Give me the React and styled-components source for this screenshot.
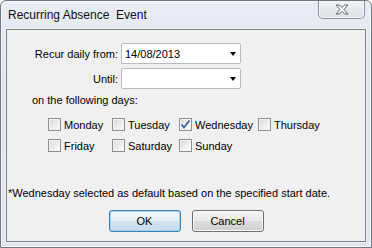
import React from 'react';
import styled, { createGlobalStyle } from 'styled-components';

const GlobalStyle = createGlobalStyle`
  html, body {
    margin: 0;
    padding: 0;
    background: #ffffff;
  }
  body {
    font-family: 'Liberation Sans', Arial, sans-serif;
    font-size: 11px;
    color: #000;
  }
`;

const Window = styled.div`
  box-sizing: border-box;
  width: 372px;
  height: 248px;
  display: flex;
  flex-direction: column;
  border: 1px solid #6f7882;
  border-radius: 6px 6px 0 0;
  background: linear-gradient(180deg, #e9eef3 0%, #dde4ec 30%, #dfe5ec 100%);
  box-shadow: inset 0 0 0 1px #f6f8fa;
  overflow: hidden;
`;

const TitleBar = styled.div`
  height: 28px;
  display: flex;
  align-items: flex-start;
  justify-content: space-between;
  padding-left: 7px;
  padding-right: 6px;
`;

const Title = styled.div`
  font-size: 12px;
  line-height: 14px;
  margin-top: 7px;
  white-space: pre;
  color: #101010;
`;

const CloseButton = styled.div`
  box-sizing: border-box;
  width: 47px;
  height: 19px;
  margin-top: -1px;
  display: flex;
  align-items: center;
  justify-content: center;
  border: 1px solid #8a9098;
  border-top: none;
  border-radius: 0 0 5px 5px;
  background: linear-gradient(180deg, #f3f5f8 0%, #e6eaef 50%, #dde2e8 100%);
  box-shadow: inset 0 0 0 1px #f8fafc;
`;

const Body = styled.div`
  flex: 1;
  margin: 0 5px 5px 5px;
  border: 1px solid #7c8086;
  background: #f0f0f0;
  box-shadow: 0 0 0 1px #f4f6f8;
  display: flex;
  flex-direction: column;
`;

const Form = styled.div`
  display: grid;
  grid-template-columns: 111px 120px;
  grid-auto-rows: 21px;
  column-gap: 3px;
  row-gap: 4px;
  margin-top: 13px;
`;

const Label = styled.div`
  display: flex;
  align-items: center;
  justify-content: flex-end;
`;

const Select = styled.div`
  box-sizing: border-box;
  display: flex;
  align-items: center;
  justify-content: space-between;
  padding: 0 4px 0 3px;
  background: #fff;
  border: 1px solid #b7babf;
  border-radius: 2px;
`;

const Arrow = styled.span`
  width: 0;
  height: 0;
  border-left: 3.5px solid transparent;
  border-right: 3.5px solid transparent;
  border-top: 4px solid #000;
`;

const SectionLabel = styled.div`
  margin: 4px 0 0 25px;
  height: 14px;
  line-height: 14px;
`;

const Days = styled.div`
  display: grid;
  grid-template-columns: 64px 67px 79px auto;
  grid-auto-rows: 21px;
  margin: 7px 0 0 41px;
`;

const Day = styled.label`
  display: flex;
  align-items: center;
  gap: 3px;
`;

const Box = styled.span`
  box-sizing: border-box;
  width: 13px;
  height: 13px;
  display: flex;
  align-items: center;
  justify-content: center;
  border: 1px solid #8e8f8f;
  background: linear-gradient(135deg, #d6d6d6 0%, #f0f0f0 60%, #fdfdfd 100%);
  box-shadow: inset 0 0 0 1px #f4f4f4;
`;

const Note = styled.div`
  margin: 30px 0 0 1px;
  height: 14px;
  line-height: 14px;
`;

const Buttons = styled.div`
  display: flex;
  justify-content: center;
  gap: 11px;
  margin-top: 10px;
`;

const Button = styled.div`
  box-sizing: border-box;
  width: 72px;
  height: 22px;
  display: flex;
  align-items: center;
  justify-content: center;
  border: 1px solid ${(p) => (p.$default ? '#3c7fb1' : '#707070')};
  border-radius: 3px;
  background: ${(p) =>
    p.$default
      ? 'linear-gradient(180deg, #f2f7fb 0%, #e6eff7 50%, #d3e3f0 51%, #c6dbec 100%)'
      : 'linear-gradient(180deg, #f2f2f2 0%, #ebebeb 50%, #dddddd 51%, #cfcfcf 100%)'};
  box-shadow: inset 0 0 0 1px ${(p) => (p.$default ? '#9fd3f0' : '#fbfbfb')};
`;

const Check = () => (
  <svg width="11" height="11" viewBox="0 0 11 11">
    <path d="M1.5 5.5 L4 8.5 L9.5 1.5" fill="none" stroke="#3a56a0" strokeWidth="1.6" />
  </svg>
);

const CloseIcon = () => (
  <svg width="14" height="11" viewBox="0 0 14 11">
    <path
      d="M1 1 H4.5 L7 3.6 L9.5 1 H13 L9 5.5 L13 10 H9.5 L7 7.4 L4.5 10 H1 L5 5.5 Z"
      fill="#f4f6f8"
      stroke="#5f656c"
      strokeWidth="1"
      strokeLinejoin="round"
    />
  </svg>
);

const days = [
  ['Monday', false],
  ['Tuesday', false],
  ['Wednesday', true],
  ['Thursday', false],
  ['Friday', false],
  ['Saturday', false],
  ['Sunday', false],
];

const App = () => {
  return (
    <>
      <GlobalStyle />
      <Window>
        <TitleBar>
          <Title>Recurring Absence  Event</Title>
          <CloseButton>
            <CloseIcon />
          </CloseButton>
        </TitleBar>
        <Body>
          <Form>
            <Label>Recur daily from:</Label>
            <Select>
              <span>14/08/2013</span>
              <Arrow />
            </Select>
            <Label>Until:</Label>
            <Select>
              <span />
              <Arrow />
            </Select>
          </Form>
          <SectionLabel>on the following days:</SectionLabel>
          <Days>
            {days.map(([name, checked]) => (
              <Day key={name}>
                <Box>{checked && <Check />}</Box>
                {name}
              </Day>
            ))}
          </Days>
          <Note>*Wednesday selected as default based on the specified start date.</Note>
          <Buttons>
            <Button $default>OK</Button>
            <Button>Cancel</Button>
          </Buttons>
        </Body>
      </Window>
    </>
  );
};

export default App;
